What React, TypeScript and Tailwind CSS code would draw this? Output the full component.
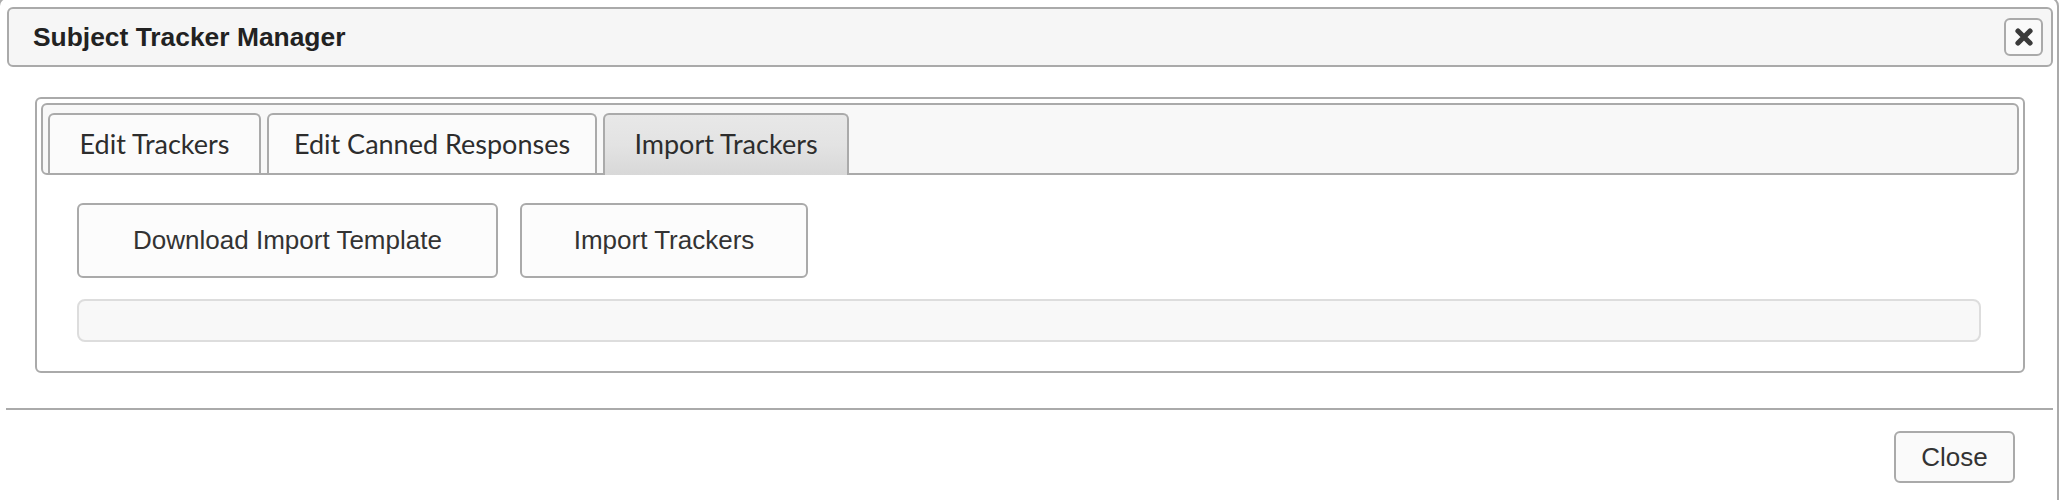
import React from "react";

const sans = { fontFamily: '"Liberation Sans", Arial, Helvetica, sans-serif' };

export default function App() {
  return (
    <div className="w-[2060px] h-[500px] overflow-hidden bg-white" style={sans}>
      <div className="-ml-[2px] -mt-[3px] w-[2061px] h-[520px] border-2 border-[#aaaaaa] rounded-[9px] bg-white pt-[8px]">
        {/* Header */}
        <div className="ml-[7px] w-[2046px] h-[60px] border-2 border-[#aaaaaa] rounded-[6px] bg-[#f6f6f6] flex items-center justify-between pl-[24px] pr-[8px]">
          <span className="font-['Liberation_Sans',Arial,sans-serif] text-[26.4px] font-bold text-[#222222] leading-none">
            Subject Tracker Manager
          </span>
          <button className="w-[39px] h-[38px] border-2 border-[#aaaaaa] rounded-[6px] bg-[#fafafa] flex items-center justify-center">
            <svg width="20" height="18" viewBox="0 0 20 18">
              <path d="M4 3 L16 15 M16 3 L4 15" stroke="#3a3a3a" strokeWidth="5.2" strokeLinecap="round" />
            </svg>
          </button>
        </div>

        {/* Tabs panel */}
        <div className="mt-[30px] ml-[35px] w-[1990px] h-[276px] border-2 border-[#aaaaaa] rounded-[6px] p-[4px] bg-white">
          <div className="h-[72px] border-2 border-[#aaaaaa] rounded-[6px] bg-[#f8f8f8] flex items-end pl-[5px] gap-[6px]">
            <div className="w-[213px] h-[60px] border-2 border-b-0 border-[#aaaaaa] rounded-t-[6px] bg-[#fbfbfb] flex items-center justify-center font-['Lato',sans-serif] text-[27px] text-[#2d2d2d]">
              Edit Trackers
            </div>
            <div className="w-[330px] h-[60px] border-2 border-b-0 border-[#aaaaaa] rounded-t-[6px] bg-[#fbfbfb] flex items-center justify-center font-['Lato',sans-serif] text-[27px] text-[#2d2d2d]">
              Edit Canned Responses
            </div>
            <div className="w-[246px] h-[62px] -mb-[2px] pb-[2px] border-2 border-b-0 border-[#aaaaaa] rounded-t-[6px] bg-gradient-to-b from-[#e8e8e8] via-[#e3e3e3] to-[#d8d8d8] flex items-center justify-center font-['Lato',sans-serif] text-[27px] text-[#2d2d2d]">
              Import Trackers
            </div>
          </div>
          <div className="pt-[28px] pl-[36px] pr-[38px]">
            <div className="flex gap-[22px]">
              <button className="w-[421px] h-[75px] border-2 border-[#aaaaaa] rounded-[6px] bg-[#fcfcfc] text-[26px] text-[#333333]">
                Download Import Template
              </button>
              <button className="w-[288px] h-[75px] border-2 border-[#aaaaaa] rounded-[6px] bg-[#fcfcfc] text-[26px] text-[#333333]">
                Import Trackers
              </button>
            </div>
            <div className="mt-[21px] h-[43px] border-2 border-[#dddddd] rounded-[8px] bg-[#f8f8f8]" />
          </div>
        </div>

        {/* Footer */}
        <div className="mt-[35px] ml-[6px] w-[2047px] h-[2px] bg-[#aaaaaa]" />
        <div className="flex justify-end pr-[42px] pt-[21px]">
          <button className="w-[121px] h-[52px] border-2 border-[#aaaaaa] rounded-[6px] bg-[#fafafa] text-[26px] text-[#333333]">
            Close
          </button>
        </div>
      </div>
    </div>
  );
}
